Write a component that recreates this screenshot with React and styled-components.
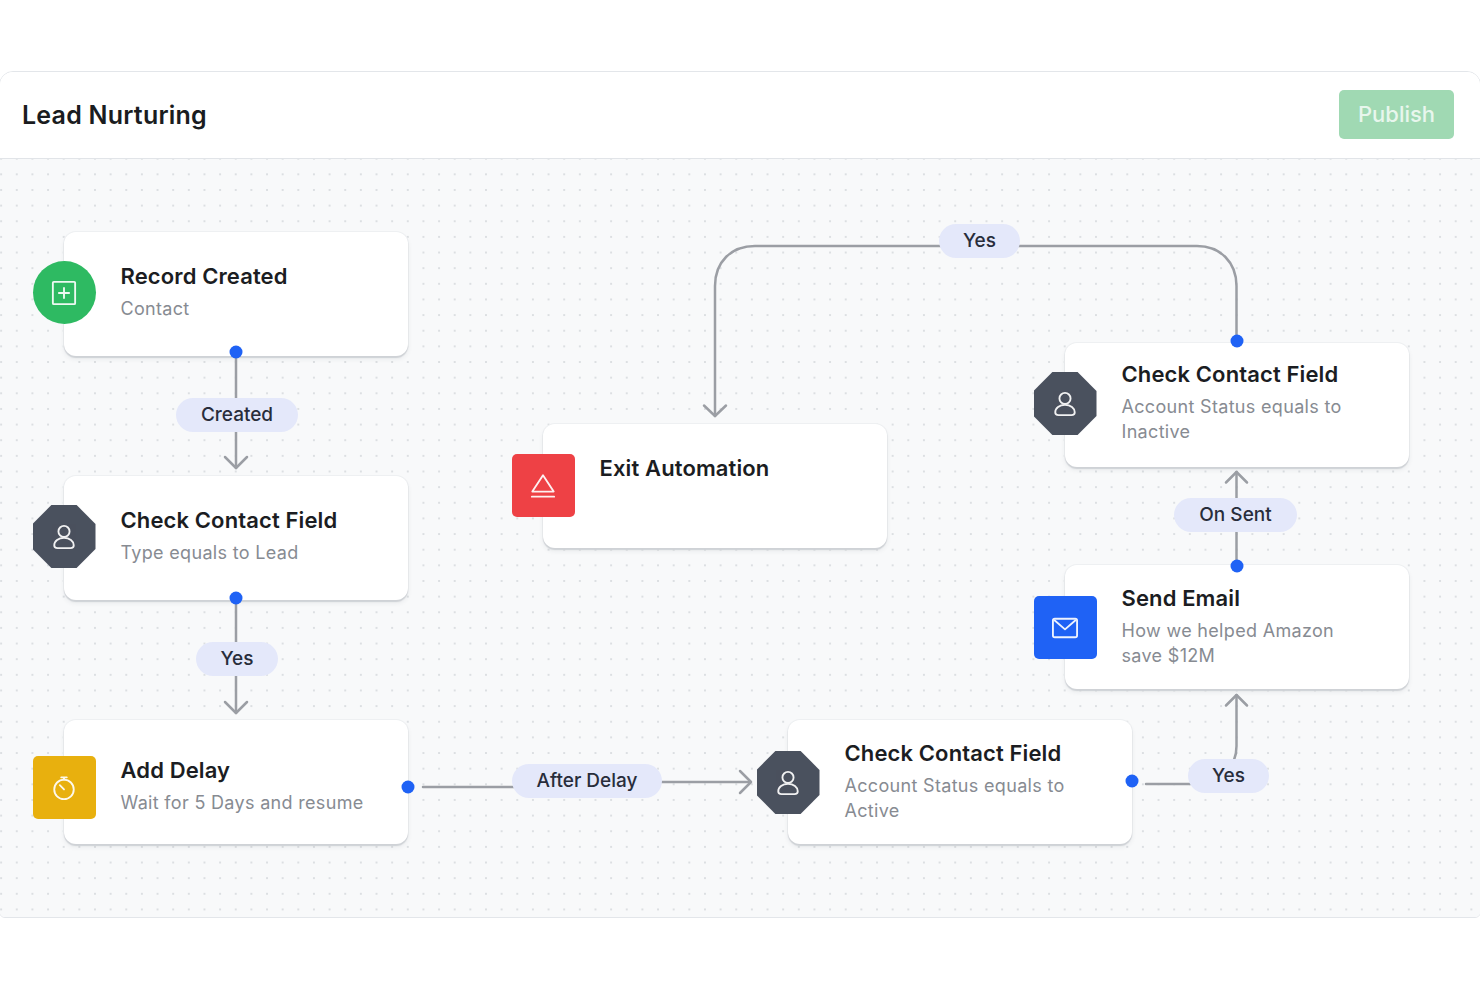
import React from 'react';
import styled, { createGlobalStyle } from 'styled-components';

const GlobalStyle = createGlobalStyle`
  html, body {
    margin: 0;
    padding: 0;
    background: #fff;
    overflow: hidden;
  }
  body {
    font-family: Inter, "Liberation Sans", sans-serif;
    -webkit-font-smoothing: antialiased;
  }
`;

const nodes = [
  { id: 1, x: 64, y: 232, title: 'Record Created', sub: ['Contact'], kind: 'green', icon: 'plus', iconTop: 29, padTop: 30 },
  { id: 2, x: 64, y: 476, title: 'Check Contact Field', sub: ['Type equals to Lead'], kind: 'dark', icon: 'user', iconTop: 29, padTop: 30 },
  { id: 3, x: 64, y: 720, title: 'Add Delay', sub: ['Wait for 5 Days and resume'], kind: 'yellow', icon: 'timer', iconTop: 36, padTop: 36 },
  { id: 4, x: 543, y: 424, title: 'Exit Automation', sub: [], kind: 'red', icon: 'exit', iconTop: 30, padTop: 30 },
  { id: 5, x: 788, y: 720, title: 'Check Contact Field', sub: ['Account Status equals to', 'Active'], kind: 'dark', icon: 'user', iconTop: 31, padTop: 19 },
  { id: 6, x: 1065, y: 565, title: 'Send Email', sub: ['How we helped Amazon', 'save $12M'], kind: 'blue', icon: 'mail', iconTop: 31, padTop: 19 },
  { id: 7, x: 1065, y: 343, title: 'Check Contact Field', sub: ['Account Status equals to', 'Inactive'], kind: 'dark', icon: 'user', iconTop: 29, padTop: 17 },
];

const pills = [
  { text: 'Created', x: 176, y: 398, w: 122 },
  { text: 'Yes', x: 196, y: 642, w: 82 },
  { text: 'After Delay', x: 512, y: 764, w: 150 },
  { text: 'Yes', x: 1188, y: 759, w: 81 },
  { text: 'On Sent', x: 1174, y: 498, w: 123 },
  { text: 'Yes', x: 939, y: 224, w: 81 },
];

const edges = [
  'M236 352V400M236 430V468',
  'M225 457L236 468L247 457',
  'M236 598V644M236 674V713',
  'M225 702L236 713L247 702',
  'M423 787H514M660 782H750',
  'M740 771L751 782L740 793',
  'M1146 784H1190M1234 760C1236 755 1236.500 752 1236.500 746V695',
  'M1226 705.500L1236.500 695L1247 705.500',
  'M1236.500 566V530M1236.500 499V472',
  'M1226 482.500L1236.500 472L1247 482.500',
  'M1236.500 341V286C1236.500 262 1220 246 1197 246H1018M941 246H755C731 246 715 262 715 286V416',
  'M704 405.500L715 416L726 405.500',
];

const ports = [[236, 352], [236, 598], [408, 787], [1132, 781], [1237, 566], [1237, 341]];

function NodeIcon({ name }) {
  if (name === 'plus') {
    return (
      <IconSvg viewBox="0 0 28 28">
        <rect x="2" y="2" width="24" height="24" rx="1" />
        <path d="M14 8.500V19.500M8.500 14H19.500" />
      </IconSvg>
    );
  }
  if (name === 'user') {
    return (
      <IconSvg viewBox="0 0 28 28">
        <circle cx="14" cy="8" r="6" />
        <path d="M7 26H21C23 26 24.500 25 24.500 23C24.500 18.500 20 15 14 15C8 15 3.500 18.500 3.500 23C3.500 25 5 26 7 26Z" />
      </IconSvg>
    );
  }
  if (name === 'timer') {
    return (
      <IconSvg viewBox="0 0 28 28">
        <circle cx="14" cy="15.500" r="10.500" />
        <path d="M11 2.500H17M14 2.500V5M9.500 11L14 15.500" />
      </IconSvg>
    );
  }
  if (name === 'exit') {
    return (
      <IconSvg viewBox="0 0 28 28">
        <path d="M14 2.500L25.500 20H2.500Z" />
        <path d="M2 25.500H26" />
      </IconSvg>
    );
  }
  return (
    <IconSvg viewBox="0 0 28 28">
      <rect x="1" y="4" width="26" height="20" rx="2" />
      <path d="M3 6L14 15.500L25 6" />
    </IconSvg>
  );
}

export default function App() {
  return (
    <>
      <GlobalStyle />
      <Panel>
        <Header>
          <Title>Lead Nurturing</Title>
          <PublishButton>Publish</PublishButton>
        </Header>
        <Canvas>
          {nodes.map((n) => (
            <Node key={n.id} $x={n.x} $y={n.y} $padTop={n.padTop}>
              <IconTile $kind={n.kind} $top={n.iconTop}>
                <NodeIcon name={n.icon} />
              </IconTile>
              <NodeTitle>{n.title}</NodeTitle>
              {n.sub.length > 0 && (
                <NodeSub>
                  {n.sub.map((line) => (
                    <div key={line}>{line}</div>
                  ))}
                </NodeSub>
              )}
            </Node>
          ))}
          <Wires viewBox="0 159 1480 759">
            {edges.map((d) => (
              <path key={d} d={d} />
            ))}
            {ports.map(([cx, cy]) => (
              <Port key={cx + '-' + cy} cx={cx} cy={cy} r="6.500" />
            ))}
          </Wires>
          {pills.map((p) => (
            <Pill key={p.text + p.x} $x={p.x} $y={p.y} $w={p.w}>
              {p.text}
            </Pill>
          ))}
        </Canvas>
      </Panel>
    </>
  );
}

const Panel = styled.div`
  margin: 71px -1px 0;
  height: 847px;
  box-sizing: border-box;
  border: 1px solid #e3e6ea;
  border-radius: 14px 14px 6px 6px;
  overflow: hidden;
  background: #fff;
`;

const Header = styled.header`
  height: 87px;
  box-sizing: border-box;
  display: flex;
  align-items: center;
  justify-content: space-between;
  padding: 0 26px 1px 22px;
  border-bottom: 1px solid #e1e4e8;
  background: #fff;
`;

const Title = styled.h1`
  margin: 0;
  font-size: 25px;
  font-weight: 600;
  letter-spacing: 0.22px;
  color: #1a1c20;
`;

const PublishButton = styled.button`
  width: 115px;
  height: 49px;
  padding: 0 0 2px;
  border: 0;
  border-radius: 5px;
  background: #a0d9b3;
  color: #e8f6ed;
  font-family: inherit;
  font-size: 22px;
  font-weight: 500;
`;

const Canvas = styled.main`
  position: relative;
  height: 759px;
  overflow: hidden;
  background-color: #f8f9fa;
  background-image: radial-gradient(circle, #dcdfe2 0.8px, transparent 1.1px);
  background-size: 15.65px 15.65px;
  background-position: -6.7px 7.5px;
`;

const Node = styled.section`
  position: absolute;
  left: ${(p) => p.$x}px;
  top: ${(p) => p.$y - 159}px;
  width: 344px;
  height: 124px;
  box-sizing: border-box;
  padding: ${(p) => p.$padTop}px 16px 0 56.5px;
  background: #fff;
  border-radius: 12px;
  box-shadow: 0 2px 1px #cfd2d6, 0 3px 5px rgba(40, 50, 70, 0.08), 0 0 0 1px #eff1f3;
`;

const tileColors = {
  green: '#2eba62',
  dark: '#4a515e',
  yellow: '#e8b00e',
  red: '#ee4145',
  blue: '#1f62f5',
};

const IconTile = styled.div`
  position: absolute;
  left: -31.5px;
  top: ${(p) => p.$top}px;
  width: 63px;
  height: 63px;
  display: flex;
  align-items: center;
  justify-content: center;
  background: ${(p) => tileColors[p.$kind]};
  border-radius: ${(p) => (p.$kind === 'green' ? '50%' : p.$kind === 'dark' ? '0' : '5px')};
  clip-path: ${(p) =>
    p.$kind === 'dark' ? 'polygon(30% 0, 70% 0, 100% 30%, 100% 70%, 70% 100%, 30% 100%, 0 70%, 0 30%)' : 'none'};
`;

const IconSvg = styled.svg`
  width: 26px;
  height: 26px;
  fill: none;
  stroke: #fff;
  stroke-width: 2;
  stroke-linecap: round;
  stroke-linejoin: round;
  opacity: 0.92;
`;

const NodeTitle = styled.div`
  font-size: 22px;
  font-weight: 600;
  line-height: 28px;
  letter-spacing: 0.12px;
  color: #1b1d22;
`;

const NodeSub = styled.div`
  margin-top: 6px;
  font-size: 18px;
  font-weight: 400;
  line-height: 25px;
  letter-spacing: 0.32px;
  color: #878b92;
`;

const Wires = styled.svg`
  position: absolute;
  left: 0;
  top: 0;
  width: 1480px;
  height: 759px;
  pointer-events: none;
  fill: none;
  stroke: #9b9ea4;
  stroke-width: 2.500;
  stroke-linecap: round;
  stroke-linejoin: round;
`;

const Port = styled.circle`
  fill: #1f62f5;
  stroke: none;
`;

const Pill = styled.div`
  position: absolute;
  left: ${(p) => p.$x}px;
  top: ${(p) => p.$y - 159}px;
  width: ${(p) => p.$w}px;
  height: 34px;
  padding-bottom: 2px;
  box-sizing: border-box;
  display: flex;
  align-items: center;
  justify-content: center;
  border-radius: 17px;
  background: #e4e8fa;
  font-size: 19px;
  font-weight: 500;
  color: #282d3b;
`;
